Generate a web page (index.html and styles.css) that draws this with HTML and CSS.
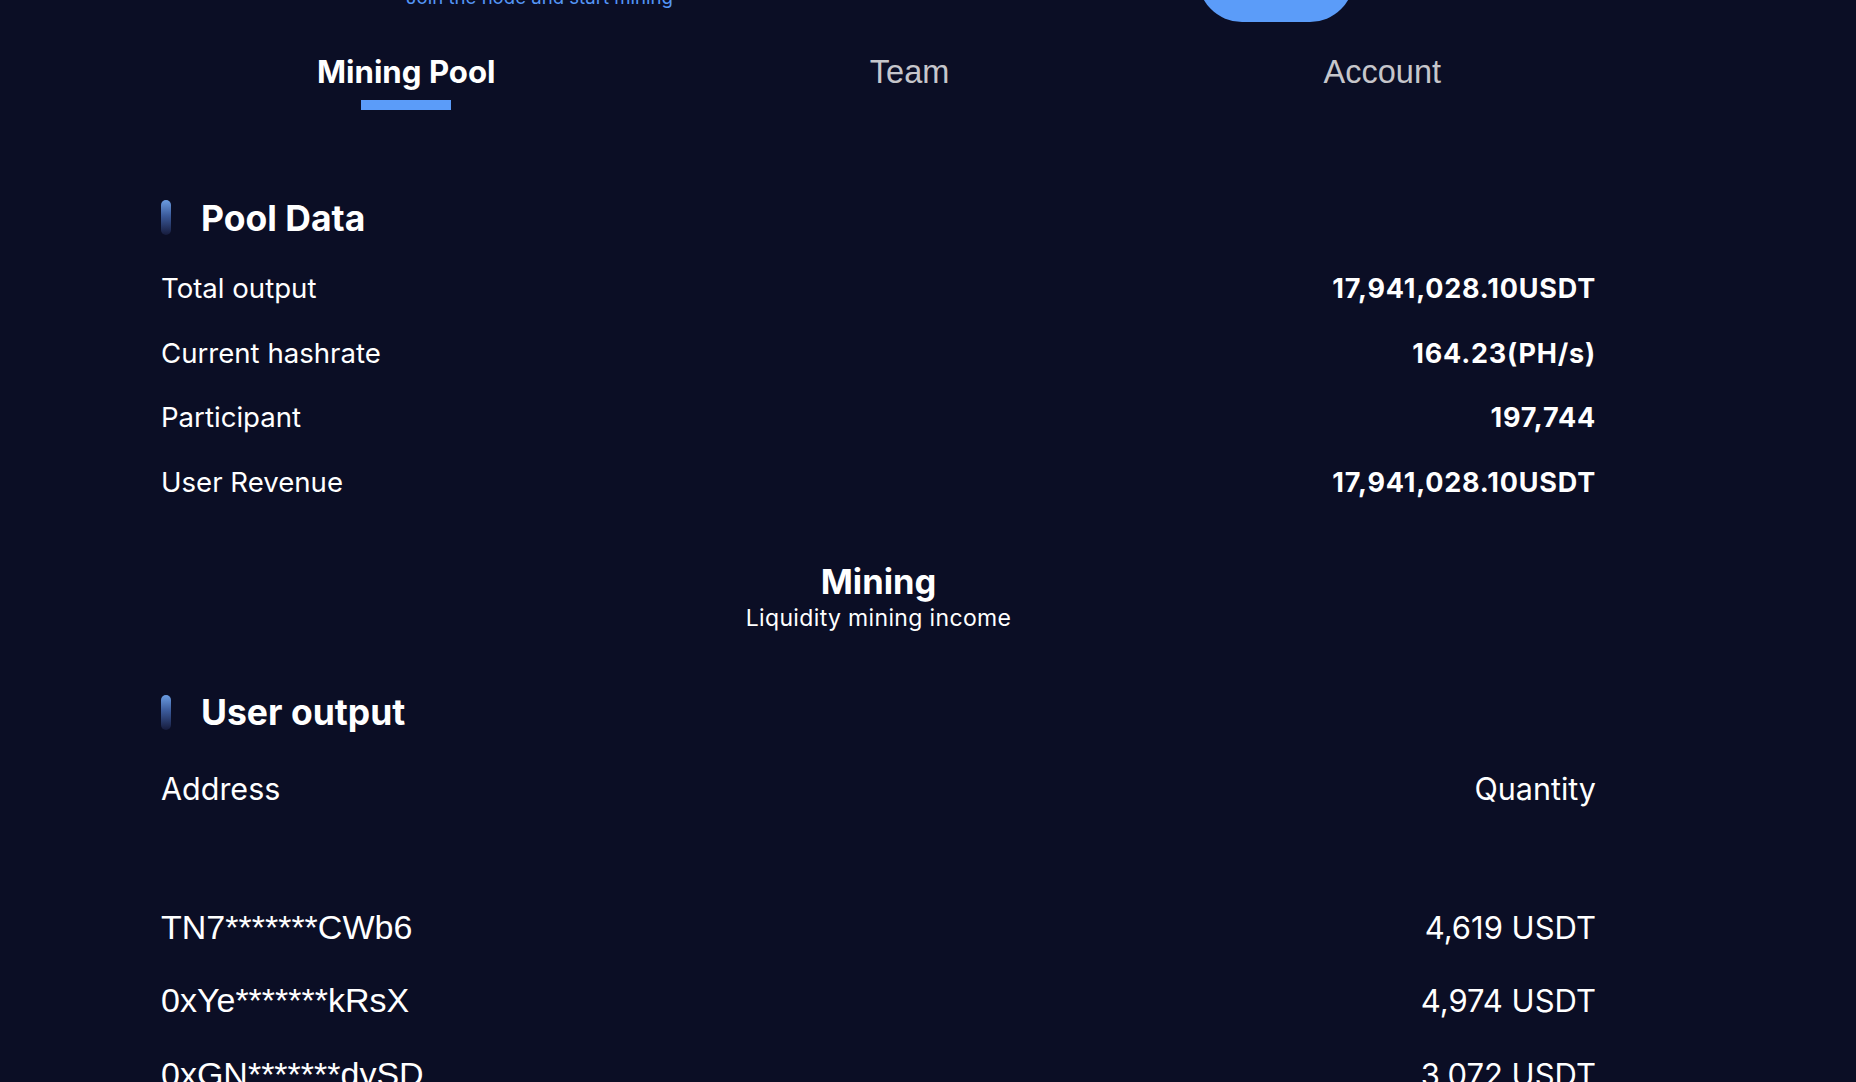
FILE: index.html
```html
<!DOCTYPE html>
<html lang="en">
<head>
<meta charset="utf-8">
<title>Mining Pool</title>
<link rel="stylesheet" href="styles.css">
</head>
<body>
<div class="page">
  <div class="hero">
    <div class="hero-sub">Join the node and start mining</div>
    <div class="hero-btn"></div>
  </div>

  <nav class="tabs">
    <div class="tab active">Mining Pool</div>
    <div class="tab">Team</div>
    <div class="tab">Account</div>
  </nav>

  <section class="pool">
    <h2 class="sec-title"><span class="sec-bar"></span>Pool Data</h2>
    <div class="stat-row"><span class="stat-label">Total output</span><span class="stat-value">17,941,028.10USDT</span></div>
    <div class="stat-row"><span class="stat-label">Current hashrate</span><span class="stat-value">164.23(PH/s)</span></div>
    <div class="stat-row"><span class="stat-label">Participant</span><span class="stat-value">197,744</span></div>
    <div class="stat-row"><span class="stat-label">User Revenue</span><span class="stat-value">17,941,028.10USDT</span></div>
  </section>

  <section class="mining">
    <div class="mining-title">Mining</div>
    <div class="mining-sub">Liquidity mining income</div>
  </section>

  <section class="output">
    <h2 class="sec-title"><span class="sec-bar"></span>User output</h2>
    <div class="out-head"><span>Address</span><span>Quantity</span></div>
    <div class="out-list">
      <div class="out-row"><span class="addr">TN7*******CWb6</span><span class="qty">4,619 USDT</span></div>
      <div class="out-row"><span class="addr">0xYe*******kRsX</span><span class="qty">4,974 USDT</span></div>
      <div class="out-row"><span class="addr">0xGN*******dySD</span><span class="qty">3,072 USDT</span></div>
    </div>
  </section>
</div>
</body>
</html>
```

FILE: styles.css
```css
* { box-sizing: border-box; }
html, body {
  margin: 0;
  padding: 0;
  background: #0b0e25;
  color: #ffffff;
  font-family: Inter, "Noto Sans", sans-serif;
  overflow: hidden;
}
.page {
  width: 1435px;
  margin-left: 161px;
}

/* hero (scrolled, only its bottom edge is visible) */
.hero {
  display: flex;
  height: 22px;
  padding: 0 242px 0 245px;
  justify-content: space-between;
  align-items: flex-start;
}
.hero-sub {
  font-size: 18.6px;
  line-height: 24px;
  margin-top: -15px;
  color: #5596f6;
  white-space: nowrap;
}
.hero-btn {
  width: 156px;
  height: 88px;
  margin-top: -66px;
  border-radius: 44px;
  background: #5b9cf9;
}

/* tabs */
.tabs {
  display: flex;
  justify-content: space-between;
  align-items: flex-start;
  padding: 0 155px 0 156px;
  margin-top: 32px;
}
.tab {
  font-family: "Liberation Sans", Arial, sans-serif;
  font-size: 32.5px;
  line-height: 36px;
  color: #c6c6cb;
  white-space: nowrap;
}
.tab.active {
  font-family: Inter, sans-serif;
  font-weight: 700;
  font-size: 31.2px;
  color: #ffffff;
}
.tab.active::after {
  content: "";
  display: block;
  width: 90px;
  height: 10px;
  margin: 10px auto 0;
  background: #5b9cf9;
}

/* section titles */
.sec-title {
  display: flex;
  align-items: flex-start;
  gap: 30px;
  margin: 0;
  font-size: 35.5px;
  font-weight: 700;
  line-height: 44px;
}
.sec-bar {
  flex: none;
  width: 10px;
  height: 35px;
  margin-top: 3px;
  border-radius: 5px;
  background: linear-gradient(180deg, #6b9de3 0%, #3b5a9a 45%, #161b3c 100%);
}

.pool { margin-top: 87px; }
.pool .sec-title { margin-bottom: 15px; }
.stat-row {
  display: flex;
  justify-content: space-between;
  align-items: baseline;
  height: 64.7px;
  line-height: 64.7px;
  font-size: 27.6px;
}
.stat-value {
  font-weight: 700;
  font-size: 27px;
  letter-spacing: 0.8px;
}

/* mining */
.mining {
  margin-top: 46px;
  text-align: center;
}
.mining-title {
  font-size: 34.5px;
  font-weight: 700;
  line-height: 41px;
}
.mining-sub {
  margin-top: 3px;
  font-size: 23px;
  line-height: 27px;
  letter-spacing: 0.35px;
}

/* user output */
.output { margin-top: 59px; }
.output .sec-title .sec-bar { margin-top: 4px; }
.out-head {
  display: flex;
  justify-content: space-between;
  margin-top: 36px;
  font-size: 30.5px;
  line-height: 36px;
}
.out-list { margin-top: 102px; }
.out-row {
  display: flex;
  justify-content: space-between;
  align-items: baseline;
  height: 73.5px;
  line-height: 36px;
}
.addr {
  font-family: "Liberation Sans", Arial, sans-serif;
  font-size: 34px;
}
.qty {
  font-size: 31px;
}
```
